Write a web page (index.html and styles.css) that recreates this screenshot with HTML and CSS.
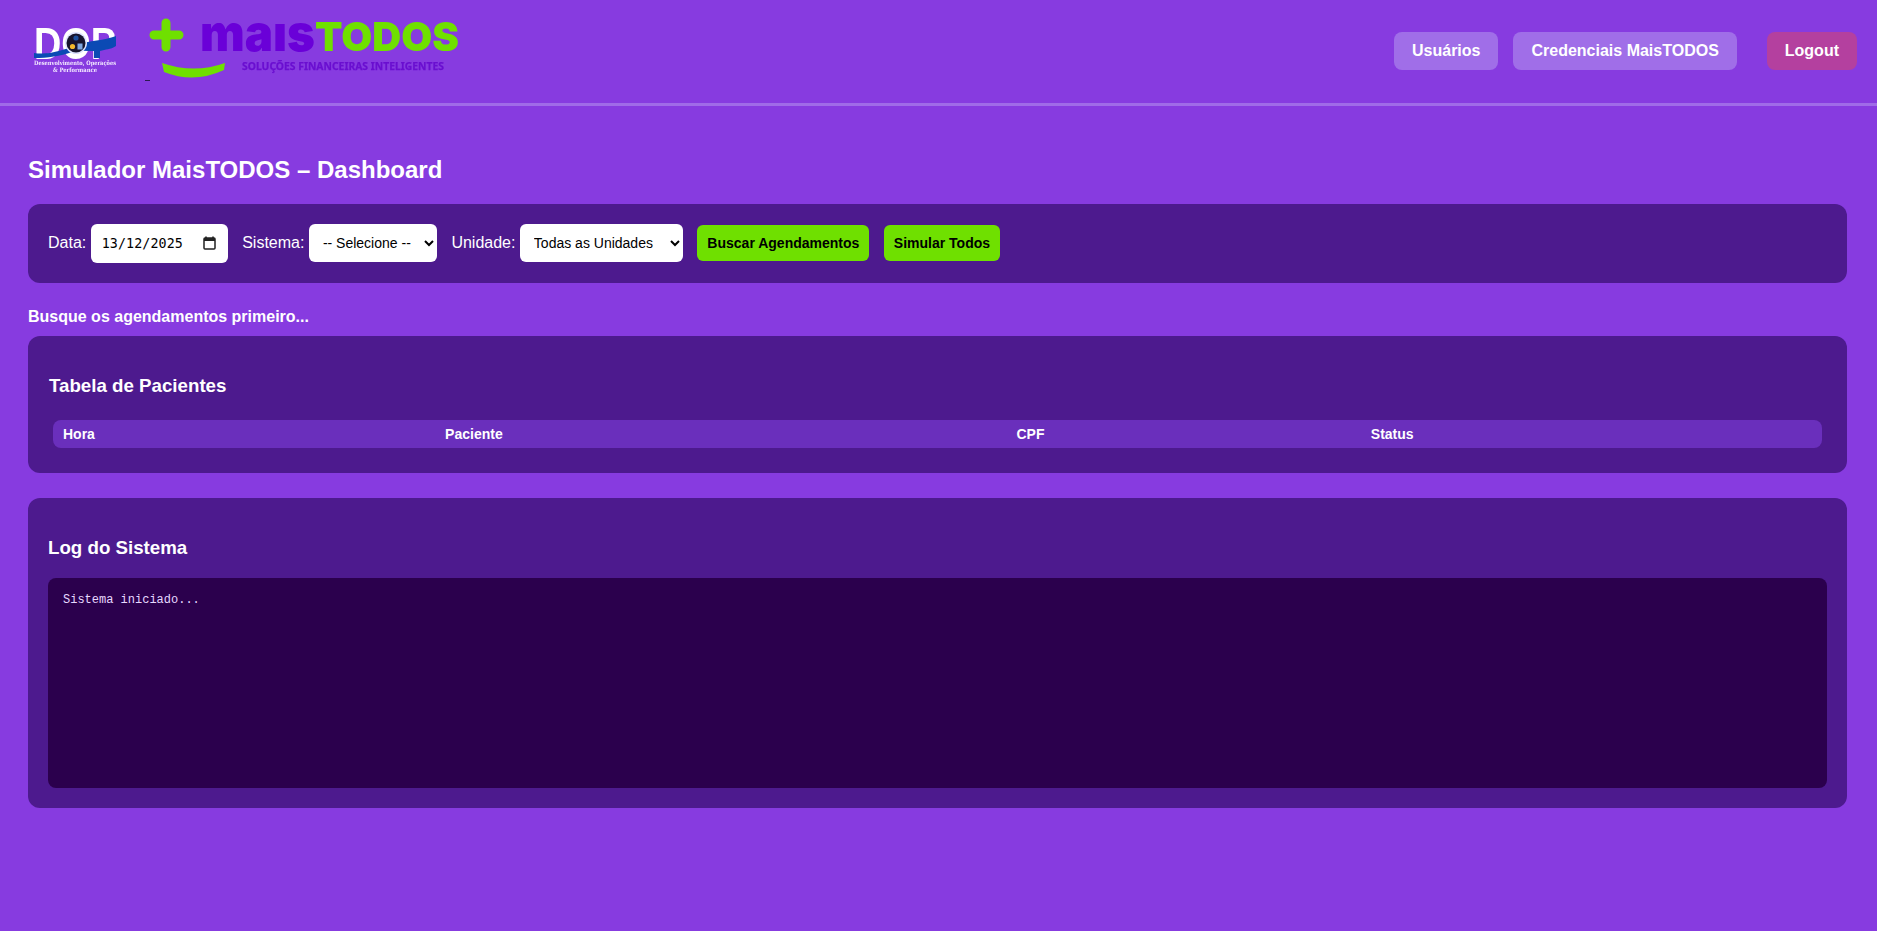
FILE: index.html
```html
<!DOCTYPE html>
<html lang="pt-BR">
<head>
<meta charset="utf-8">
<title>Simulador MaisTODOS – Dashboard</title>
<link rel="stylesheet" href="styles.css">
</head>
<body>
<header class="topbar">
  <div class="logos">
    <svg class="logo logo-dop" width="95" height="71" viewBox="0 0 95 71" role="img" aria-label="DOP">
      <text class="dop-letters" x="4" y="43" textLength="82" lengthAdjust="spacingAndGlyphs">DOP</text>
      <path class="dop-blue" d="M4 37C18 39 32 35 46 29C60 24 74 25 86 20L86 30C80 34 76 33 70 35L70 42L64 42L64 35C56 35 50 34 42 36C30 40 18 42 4 42Z"/>
      <circle cx="46" cy="27" r="11" fill="#dfe6ff"/>
      <circle cx="46" cy="27" r="9.5" fill="#17152e"/>
      <circle cx="46" cy="22" r="2.6" fill="#1c4f9e"/>
      <circle cx="42.5" cy="30.5" r="2.6" fill="#f2b92c"/>
      <rect x="47.5" y="27.5" width="5" height="6" fill="#7fa6e0"/>
      <text class="dop-sub" x="45" y="49" textLength="82" lengthAdjust="spacingAndGlyphs">Desenvolvimento, Operações</text>
      <text class="dop-sub" x="45" y="56" textLength="44" lengthAdjust="spacingAndGlyphs">&amp; Performance</text>
    </svg>
    <a class="logo-dash" href="#" aria-hidden="true"></a>
    <svg class="logo logo-mais" width="312" height="71" viewBox="0 0 312 71" role="img" aria-label="MaisTODOS">
      <path class="plus" d="M4 19H29M16 7V31"/>
      <path class="smile" d="M12 47Q44 58 75 47L74 54Q44 68 14 56Z"/>
      <text class="mais-word" x="50" y="35" textLength="115" lengthAdjust="spacingAndGlyphs">maıs</text>
      <text class="todos-word" x="165" y="35" textLength="144" lengthAdjust="spacingAndGlyphs">TODOS</text>
      <text class="mais-sub" x="92" y="54" textLength="202" lengthAdjust="spacingAndGlyphs">SOLUÇÕES FINANCEIRAS INTELIGENTES</text>
    </svg>
  </div>
  <nav class="nav">
    <a class="nav-btn" href="#">Usuários</a>
    <a class="nav-btn" href="#">Credenciais MaisTODOS</a>
    <a class="nav-btn nav-logout" href="#">Logout</a>
  </nav>
</header>

<main class="content">
  <h2 class="page-title">Simulador MaisTODOS – Dashboard</h2>

  <form class="panel filters">
    <label class="field">Data:
      <span class="date-input">
        <input class="date-text" type="text" value="13/12/2025">
        <svg class="date-icon" width="13" height="14" viewBox="0 0 13 14" aria-hidden="true">
          <path d="M3 0.5V2M10 0.5V2" stroke="#222" stroke-width="1.6" fill="none"/>
          <rect x="1" y="2" width="11" height="11" rx="1" fill="none" stroke="#222" stroke-width="1.5"/>
          <rect x="1" y="2" width="11" height="3" fill="#222"/>
        </svg>
      </span>
    </label>
    <label class="field">Sistema:
      <select class="select select-system"><option>-- Selecione --</option></select>
    </label>
    <label class="field">Unidade:
      <select class="select select-unit"><option>Todas as Unidades</option></select>
    </label>
    <button class="action" type="button">Buscar Agendamentos</button>
    <button class="action" type="button">Simular Todos</button>
  </form>

  <p class="hint">Busque os agendamentos primeiro...</p>

  <section class="panel table-panel">
    <h3 class="panel-title title-table">Tabela de Pacientes</h3>
    <table class="patients">
      <thead>
        <tr>
          <th class="col-hora">Hora</th>
          <th class="col-paciente">Paciente</th>
          <th class="col-cpf">CPF</th>
          <th class="col-status">Status</th>
        </tr>
      </thead>
    </table>
  </section>

  <section class="panel log-panel">
    <h3 class="panel-title">Log do Sistema</h3>
    <div class="log-box">Sistema iniciado...</div>
  </section>
</main>
</body>
</html>
```

FILE: styles.css
```css
* { box-sizing: border-box; }

html, body { height: 100%; }

body {
  margin: 0;
  background: #873be0;
  color: #fff;
  font-family: "Liberation Sans", Arial, sans-serif;
  overflow: hidden;
}

.topbar {
  height: 106px;
  padding: 0 20px 1px 30px;
  border-bottom: 3px solid #a06be8;
  display: flex;
  justify-content: space-between;
  align-items: center;
}

.logos {
  display: flex;
  align-items: flex-start;
  align-self: flex-start;
  margin-top: 16px;
}

.logo {
  display: block;
  overflow: visible;
  filter: blur(0.45px);
}

.logo-dash {
  display: block;
  width: 5px;
  height: 1px;
  margin: 64px 0 0 20px;
  background: #2b1a50;
}

.dop-letters {
  font: 700 44px "Liberation Sans", sans-serif;
  fill: #fff;
}

.dop-blue { fill: #0b4ab4; }

.dop-sub {
  font: 700 6px "DejaVu Serif", serif;
  fill: #f3e9ff;
  text-anchor: middle;
}

.plus {
  fill: none;
  stroke: #6fe000;
  stroke-width: 9;
  stroke-linecap: round;
}

.smile { fill: #6fe000; }

.mais-word {
  font: 900 50px Inter, sans-serif;
  fill: #6a00d8;
}

.todos-word {
  font: 900 40px Inter, sans-serif;
  fill: #6fe000;
}

.mais-sub {
  font: 700 11px "Noto Sans", sans-serif;
  fill: #6a0fd0;
  stroke: #6a0fd0;
  stroke-width: 0.25;
}

.nav {
  display: flex;
  gap: 15px;
}

.nav-btn {
  height: 38px;
  padding: 0 18px;
  border-radius: 8px;
  background: #a06ee8;
  color: #fff;
  font-size: 16px;
  font-weight: 700;
  line-height: 38px;
  text-decoration: none;
}

.nav-logout {
  margin-left: 15px;
  background: #b4409f;
}

.content {
  padding: 30px 30px 0 28px;
}

.page-title {
  margin: 20px 0 21px;
  font-size: 24px;
  line-height: 27px;
  font-weight: 700;
}

.panel {
  background: #4d1a8e;
  border-radius: 12px;
}

.filters {
  height: 79px;
  padding: 20px 20px 0;
  display: flex;
  align-items: flex-start;
  gap: 14.5px;
}

.field {
  display: flex;
  align-items: center;
  gap: 4.45px;
  height: 38px;
  font-size: 16px;
}

.date-input {
  width: 137px;
  height: 39px;
  padding: 0 12px 0 11px;
  border-radius: 6px;
  background: #fff;
  display: flex;
  align-items: center;
  justify-content: space-between;
}

.date-text {
  width: 90px;
  padding: 0;
  border: 0;
  outline: 0;
  background: transparent;
  color: #000;
  font: 13.33px "DejaVu Sans Mono", monospace;
  letter-spacing: 0.1px;
}

.date-icon {
  display: block;
  flex: none;
}

.select {
  height: 38px;
  padding: 0 10px;
  border: 0;
  border-radius: 6px;
  background: #fff;
  color: #000;
  font: 14px "Liberation Sans", sans-serif;
}

.select-system { width: 128px; }

.select-unit { width: 163px; }

.action {
  height: 36px;
  margin-top: 1px;
  padding: 0 10px;
  border: 0;
  border-radius: 6px;
  background: #6fe000;
  color: #000;
  font: 700 14px "Liberation Sans", sans-serif;
}

.hint {
  margin: 25px 0 10px;
  font-size: 16px;
  line-height: 18px;
  font-weight: 700;
}

.table-panel {
  height: 137px;
  padding: 20px;
  margin-bottom: 25px;
}

.panel-title {
  margin: 19px 0 20px;
  font-size: 18.72px;
  line-height: 21px;
  font-weight: 700;
}

.title-table {
  margin-bottom: 24px;
  padding-left: 1px;
}

.patients {
  width: calc(100% - 10px);
  margin: 0 5px;
  border-collapse: collapse;
  table-layout: fixed;
}

.patients th {
  height: 28px;
  padding: 0 10px;
  background: #6a2fbc;
  font-size: 14px;
  font-weight: 700;
  text-align: left;
}

.patients th:first-child { border-radius: 8px 0 0 8px; }

.patients th:last-child { border-radius: 0 8px 8px 0; }

.col-hora { width: 21.6%; }

.col-paciente { width: 32.3%; }

.col-cpf { width: 20.03%; }

.col-status { width: 26.07%; }

.log-panel {
  height: 310px;
  padding: 20px;
}

.log-box {
  height: 210px;
  padding: 15px;
  border-radius: 8px;
  background: #2b004d;
  color: #e6d8ff;
  font: 12px/14px "Liberation Mono", monospace;
}
```
